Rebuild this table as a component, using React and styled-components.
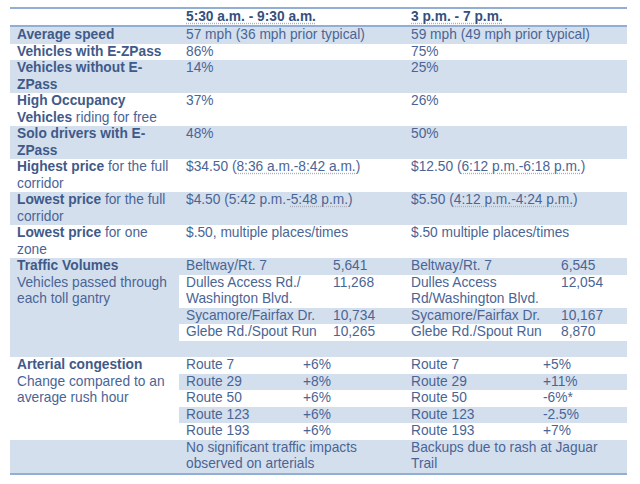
import styled, { createGlobalStyle } from "styled-components";

const GlobalStyle = createGlobalStyle`
    body {
        margin: 0;
        background: #ffffff;
        font-family: "Liberation Sans", Arial, sans-serif;
    }
`;

const BAND = "#d4dfee";
const LINE = "#92aed4";
const INK = "#4a6595";
const INK_BOLD = "#3f5a89";

const Table = styled.table`
    margin: 7px 0 0 10px;
    width: 617px;
    table-layout: fixed;
    border-collapse: separate;
    border-spacing: 0;
    border-top: 2px solid ${LINE};
    border-bottom: 2px solid ${LINE};
    font-size: 13.75px;
    line-height: 16.5px;
    color: ${INK};
`;

const HeadCell = styled.th`
    height: 16px;
    line-height: 16px;
    padding: 0 2px 0 7px;
    text-align: left;
    vertical-align: top;
    font-weight: bold;
    color: #34507f;
    border-bottom: 2px solid ${LINE};
    white-space: nowrap;
`;

const Row = styled.tr`
    background: ${(p) => (p.$shade ? BAND : "#ffffff")};
`;

const Cell = styled.td`
    padding: 0 2px 0 7px;
    vertical-align: top;
    background: ${(p) => (p.$shade === undefined ? "transparent" : p.$shade ? BAND : "#ffffff")};
`;

const Strong = styled.b`
    color: ${INK_BOLD};
`;

const Marked = styled.span`
    text-decoration: underline dotted #a9b0bb;
    text-underline-offset: 2px;
`;

const EmptyRow = styled.tr`
    background: ${BAND};
    height: 16.5px;
`;

const summary = [
    { label: <Strong>Average speed</Strong>, am: "57 mph (36 mph prior typical)", pm: "59 mph (49 mph prior typical)" },
    { label: <Strong>Vehicles with E-ZPass</Strong>, am: "86%", pm: "75%" },
    { label: <Strong>Vehicles without E-ZPass</Strong>, am: "14%", pm: "25%" },
    { label: <><Strong>High Occupancy Vehicles</Strong> riding for free</>, am: "37%", pm: "26%" },
    { label: <Strong>Solo drivers with E-ZPass</Strong>, am: "48%", pm: "50%" },
    {
        label: <><Strong>Highest price</Strong> for the full corridor</>,
        am: <>$34.50 (<Marked>8:36 a.m.-8:42 a.m.</Marked>)</>,
        pm: <>$12.50 (<Marked>6:12 p.m.-6:18 p.m.</Marked>)</>,
    },
    {
        label: <><Strong>Lowest price</Strong> for the full corridor</>,
        am: <>$4.50 (5:42 p.m.-<Marked>5:48 p.m.</Marked>)</>,
        pm: <>$5.50 (<Marked>4:12 p.m.-4:24 p.m.</Marked>)</>,
    },
    { label: <><Strong>Lowest price</Strong> for one zone</>, am: "$.50, multiple places/times", pm: "$.50 multiple places/times" },
];

const volumes = [
    { am: "Beltway/Rt. 7", amN: "5,641", pm: "Beltway/Rt. 7", pmN: "6,545" },
    { am: "Dulles Access Rd./ Washington Blvd.", amN: "11,268", pm: "Dulles Access Rd/Washington Blvd.", pmN: "12,054" },
    { am: "Sycamore/Fairfax Dr.", amN: "10,734", pm: "Sycamore/Fairfax Dr.", pmN: "10,167" },
    { am: "Glebe Rd./Spout Run", amN: "10,265", pm: "Glebe Rd./Spout Run", pmN: "8,870" },
];

const arterials = [
    { route: "Route 7", am: "+6%", pm: "+5%" },
    { route: "Route 29", am: "+8%", pm: "+11%" },
    { route: "Route 50", am: "+6%", pm: "-6%*" },
    { route: "Route 123", am: "+6%", pm: "-2.5%" },
    { route: "Route 193", am: "+6%", pm: "+7%" },
];

export default function App() {
    return (
        <>
            <GlobalStyle />
            <Table>
                <colgroup>
                    <col style={{ width: 169 }} />
                    <col style={{ width: 117 }} />
                    <col style={{ width: 30 }} />
                    <col style={{ width: 78 }} />
                    <col style={{ width: 132 }} />
                    <col style={{ width: 18 }} />
                    <col style={{ width: 73 }} />
                </colgroup>
                <thead>
                    <tr>
                        <HeadCell />
                        <HeadCell colSpan={3}>
                            <Marked>5:30 a.m. - 9:30 a.m.</Marked>
                        </HeadCell>
                        <HeadCell colSpan={3}>
                            <Marked>3 p.m. - 7 p.m.</Marked>
                        </HeadCell>
                    </tr>
                </thead>
                <tbody>
                    {summary.map((r, i) => (
                        <Row key={i} $shade={i % 2 === 0}>
                            <Cell>{r.label}</Cell>
                            <Cell colSpan={3}>{r.am}</Cell>
                            <Cell colSpan={3}>{r.pm}</Cell>
                        </Row>
                    ))}

                    {volumes.map((v, i) => (
                        <Row key={v.am} $shade={i % 2 === 0}>
                            {i === 0 && (
                                <Cell rowSpan={5} $shade>
                                    <Strong>Traffic Volumes</Strong>
                                    <br />
                                    Vehicles passed through each toll gantry
                                </Cell>
                            )}
                            <Cell colSpan={2}>{v.am}</Cell>
                            <Cell>{v.amN}</Cell>
                            <Cell colSpan={2}>{v.pm}</Cell>
                            <Cell>{v.pmN}</Cell>
                        </Row>
                    ))}
                    <EmptyRow>
                        <Cell colSpan={6} />
                    </EmptyRow>

                    {arterials.map((a, i) => (
                        <Row key={a.route} $shade={i % 2 === 1}>
                            {i === 0 && (
                                <Cell rowSpan={5} $shade={false}>
                                    <Strong>Arterial congestion</Strong>
                                    <br />
                                    Change compared to an average rush hour
                                </Cell>
                            )}
                            <Cell>{a.route}</Cell>
                            <Cell colSpan={2}>{a.am}</Cell>
                            <Cell>{a.route}</Cell>
                            <Cell colSpan={2}>{a.pm}</Cell>
                        </Row>
                    ))}
                    <Row $shade>
                        <Cell />
                        <Cell colSpan={3}>No significant traffic impacts observed on arterials</Cell>
                        <Cell colSpan={3}>Backups due to rash at Jaguar Trail</Cell>
                    </Row>
                </tbody>
            </Table>
        </>
    );
}
